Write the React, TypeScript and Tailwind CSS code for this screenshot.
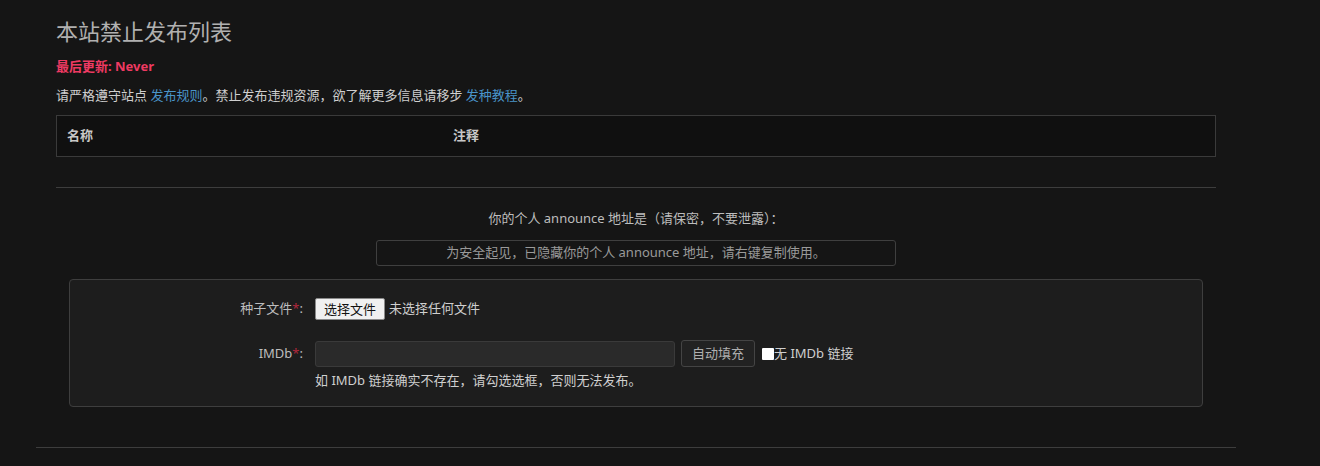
import React from "react";

export default function App() {
  const font = { fontFamily: '"Noto Sans", "Noto Sans CJK SC", sans-serif' };
  return (
    <div className="min-h-[466px] w-full bg-[#151515] text-[#c8c8c8]" style={font}>
      <div className="ml-[36px] w-[1200px] px-5 pb-5">
        <h1 className="pt-4 text-[22px] leading-[30px] font-normal text-[#b0b0b0]">本站禁止发布列表</h1>
        <div className="mt-[10px] text-[13px] leading-[20px] font-bold text-[#ee3a62]">最后更新: Never</div>
        <p className="mt-[9px] text-[13px] leading-[20px] text-[#cfcfcf]">
          请严格遵守站点 <a className="text-[#4a94c8]">发布规则</a>。禁止发布违规资源，欲了解更多信息请移步{" "}
          <a className="text-[#4a94c8]">发种教程</a>。
        </p>
        <div className="mt-[10px] flex h-[42px] items-center border border-[#3a3a3a] bg-[#101010] text-[13px] font-bold text-[#c8c8c8]">
          <div className="w-[396px] pl-[10px]">名称</div>
          <div>注释</div>
        </div>
        <div className="mt-[30px] h-px bg-[#3d3d3d]" />
        <div className="mt-5 text-center text-[13px] leading-[20px] text-[#bdbdbd]">
          你的个人 announce 地址是（请保密，不要泄露）：
        </div>
        <div className="mx-auto mt-3 flex h-[26px] w-[520px] items-center justify-center rounded-[3px] border border-[#3f3f3f] text-[13px] text-[#9a9a9a]">
          为安全起见，已隐藏你的个人 announce 地址，请右键复制使用。
        </div>
        <div className="mx-[13px] mt-[13px] h-[128px] rounded-[4px] border border-[#3e3e3e] bg-[#1d1d1d] pt-[18px]">
          <div className="flex items-center">
            <div className="w-[245px] pr-[12px] text-right text-[13px] text-[#bdbdbd]">
              种子文件<span className="text-[#b0283c]">*</span>:
            </div>
            <div className="flex items-center">
              <button className="h-[22px] w-[70px] rounded-[2px] border border-[#8a8a8a] bg-[#f0f0f0] text-[13px] leading-none text-[#111]">
                选择文件
              </button>
              <span className="ml-[4px] text-[13px] text-[#cfcfcf]">未选择任何文件</span>
            </div>
          </div>
          <div className="mt-5 flex items-center">
            <div className="w-[245px] pr-[12px] text-right text-[13px] text-[#bdbdbd]">
              IMDb<span className="text-[#b0283c]">*</span>:
            </div>
            <div className="h-[26px] w-[360px] rounded-[3px] border border-[#3a3a3a] bg-[#2a2a2a]" />
            <button className="ml-[6px] h-[27px] w-[74px] rounded-[3px] border border-[#444] bg-[#222] text-[13px] text-[#b0b0b0]">
              自动填充
            </button>
            <span className="ml-[7px] inline-block h-[12px] w-[12px] rounded-[1px] bg-white" />
            <span className="text-[13px] text-[#cfcfcf]">无 IMDb 链接</span>
          </div>
          <div className="ml-[245px] mt-[3px] text-[13px] leading-[20px] text-[#cfcfcf]">
            如 IMDb 链接确实不存在，请勾选选框，否则无法发布。
          </div>
        </div>
      </div>
      <div className="ml-[36px] mt-5 h-px w-[1200px] bg-[#3d3d3d]" />
    </div>
  );
}
